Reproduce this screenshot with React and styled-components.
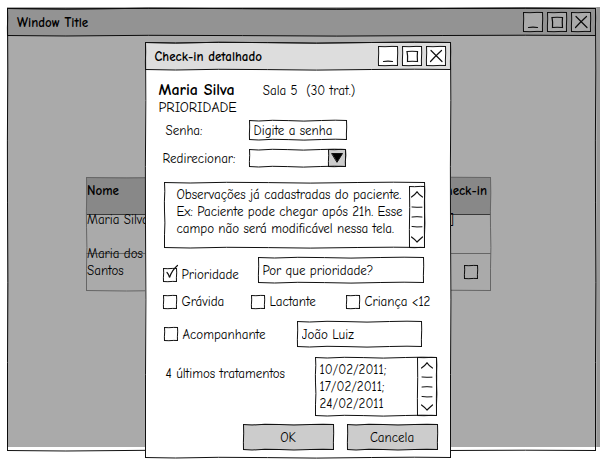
import React from 'react';
import styled, { createGlobalStyle, css } from 'styled-components';

const GlobalStyle = createGlobalStyle`
  *, *::before, *::after { box-sizing: border-box; }
  body { margin: 0; background: #fff; }
  body, button, input, select, textarea {
    font-family: "Comic Sans MS", "Comic Neue", Lato, sans-serif;
    font-size: 13px;
    line-height: 17px;
    color: #000;
  }
`;

/* ---------- hand-drawn outline ---------- */

const Outline = styled.svg`
  position: absolute;
  inset: 0;
  width: 100%;
  height: 100%;
  overflow: visible;
  pointer-events: none;
  fill: none;
  stroke: ${(p) => p.$color || '#111'};

  svg { overflow: visible; }
  path { vector-effect: non-scaling-stroke; }
`;

const LONG_H = 'M0 .5 L10 1 L24 .3 L40 .6 L56 1.1 L74 .5 L88 .2 L100 .5';
const LONG_V = 'M.5 0 L.8 14 L.4 30 L.5 44 L.9 62 L.5 80 L.5 100';
const SHORT_H = 'M0 .5 L35 .7 L70 .4 L100 .5';
const SHORT_V = 'M.5 0 L.7 35 L.4 70 L.5 100';

function Sketch({ color, small, low }) {
  const h = small ? SHORT_H : LONG_H;
  const v = small || low ? SHORT_V : LONG_V;
  return (
    <Outline $color={color} aria-hidden="true">
      <svg width="100%" height="1" viewBox="0 0 100 1" preserveAspectRatio="none"><path d={h} /></svg>
      <svg width="100%" y="100%" height="1" viewBox="0 1 100 1" preserveAspectRatio="none"><path d={h} /></svg>
      <svg width="1" height="100%" viewBox="0 0 1 100" preserveAspectRatio="none"><path d={v} /></svg>
      <svg width="1" x="100%" height="100%" viewBox="1 0 1 100" preserveAspectRatio="none"><path d={v} /></svg>
    </Outline>
  );
}

/* ---------- windows ---------- */

const Page = styled.div`
  position: relative;
  display: flex;
  min-height: 100vh;
  padding: 8px 12px 16px 7px;
`;

const MainWindow = styled.main`
  position: relative;
  flex: 1;
  background: #fff;
`;

const Dim = styled.div`
  position: absolute;
  inset: 7px 8px 20px 7px;
  background: rgba(0, 0, 0, 0.335);
`;

const EdgeShadow = styled.div`
  position: absolute;
  inset: 7px 8px 20px auto;
  width: 3px;
  background: #e4e4e4;
`;

const ModalLayer = styled.div`
  position: absolute;
  inset: 0;
  display: flex;
  justify-content: center;
  align-items: flex-start;
  padding: 42px 13px 8px 0;
`;

const Dialog = styled.section`
  position: relative;
  width: 306px;
  background: #fff;
`;

const TitleBar = styled.header`
  position: relative;
  display: flex;
  align-items: center;
  gap: 4px;
  height: 28px;
  padding: 0 5px 0 10px;
  background: #ddd;
`;

const Title = styled.h1`
  flex: 1;
  margin: 0;
  font-size: 13px;
  font-weight: 900;
`;

const WindowButton = styled.button`
  position: relative;
  display: block;
  width: 20px;
  height: 20px;
  padding: 0;
  border: 0;
  background: #fff;
`;

const Glyph = styled.svg`
  display: block;
  fill: none;
  stroke: #111;
  stroke-linecap: round;
`;

const controls = [
  { label: 'Minimizar', d: 'M5.500 15.500 Q10 14.700 14.500 15.500' },
  { label: 'Maximizar', d: 'M5 5.500 Q10 5 15.500 5.500 Q15 10 15.500 15.500 Q10 15 5.500 15.500 Q6 10 5 5.500Z' },
  { label: 'Fechar', d: 'M5 4.500 L16 15.500 M15.500 4.500 Q9 10.500 4.500 15.500' },
];

function WindowBar({ title }) {
  return (
    <TitleBar>
      <Title>{title}</Title>
      {controls.map((c) => (
        <WindowButton key={c.label} type="button" aria-label={c.label}>
          <Glyph width="20" height="20" viewBox="0 0 20 20"><path d={c.d} strokeWidth="1.2" /></Glyph>
          <Sketch small />
        </WindowButton>
      ))}
      <Sketch low />
    </TitleBar>
  );
}

/* ---------- table behind the dialog ---------- */

const TableFrame = styled.div`
  position: relative;
  width: 405px;
  max-width: 80%;
  margin: 141px auto 0 79px;
  padding-bottom: 12px;
  background:
    linear-gradient(#555, #555) 0 37px / 100% 1px no-repeat,
    linear-gradient(#999, #999) 0 76px / 100% 1px no-repeat,
    linear-gradient(#ccc, #ccc) 0 0 / 100% 37px no-repeat;
`;

const Table = styled.table`
  width: 100%;
  border-collapse: collapse;
  table-layout: fixed;
`;

const Cell = styled.td`
  height: 34px;
  width: ${(p) => p.$width || 'auto'};
  padding: 0 ${(p) => (p.$end ? '13px' : '0')} 0 1px;
  text-align: ${(p) => (p.$end ? 'right' : 'left')};
  vertical-align: ${(p) => p.$align || 'top'};
`;

const HeadCell = styled(Cell).attrs({ as: 'th' })`
  padding-top: 5px;
  padding-right: ${(p) => (p.$end ? '4px' : '0')};
  font-weight: 900;
`;

const TextMark = styled.span`
  display: inline-block;
  padding-right: 24px;
`;

/* ---------- form ---------- */

const Form = styled.form`
  display: flex;
  flex-direction: column;
  padding: 11px 13px 8px 14px;
`;

const Heading = styled.div`
  display: flex;
  align-items: center;
  gap: 28px;
  height: 18px;
`;

const Patient = styled.h2`
  margin: 0;
  font-size: 16px;
  font-weight: 900;
  line-height: 18px;
`;

const Status = styled.p`
  margin: 0;
  font-size: 14px;
`;

const Room = styled.span`
  white-space: pre;
`;

const Row = styled.div`
  display: flex;
  align-items: ${(p) => p.$align || 'center'};
  margin-top: ${(p) => p.$top}px;
  padding-left: ${(p) => p.$left || 0}px;
  justify-content: ${(p) => p.$justify || 'flex-start'};
`;

const FieldLabel = styled.label`
  width: ${(p) => (p.$width ? `${p.$width}px` : 'auto')};
  padding-top: ${(p) => p.$padTop || 0}px;
`;

const Field = styled.div`
  position: relative;
  display: flex;
  flex-shrink: 0;
  width: ${(p) => p.$width}px;
  height: ${(p) => p.$height}px;
  background: #fff;
`;

const control = css`
  flex: 1;
  min-width: 0;
  margin: 0;
  border: 0;
  border-radius: 0;
  background: transparent;
  appearance: none;
  outline: 0;
`;

const TextInput = styled.input`
  ${control}
  padding: 0 5px;
`;

const Select = styled.select`
  ${control}
  padding: 0 20px 0 5px;
`;

const SelectArrow = styled.span`
  position: absolute;
  inset: 0 0 0 auto;
  width: 18px;
  background: #ccc;
  pointer-events: none;
`;

const TextArea = styled.textarea`
  ${control}
  padding: 4px 0 0 ${(p) => p.$indent}px;
  resize: none;
  overflow: hidden;
`;

const ScrollTrack = styled.div`
  position: relative;
  display: flex;
  flex-direction: column;
  align-items: center;
  justify-content: space-between;
  width: ${(p) => p.$width}px;
  margin-top: ${(p) => p.$top || 0}px;
  padding: 5px 0;
`;

function Scrollbar({ width, top }) {
  return (
    <ScrollTrack $width={width} $top={top}>
      <Glyph width="12" height="7" viewBox="0 0 12 7"><path d="M.5 6 Q4 3.500 6 .8 Q8 4 11.500 6" strokeWidth="1.2" /></Glyph>
      <Glyph width="12" height="22" viewBox="0 0 12 22"><path d="M1 1 Q6 1.500 11 1.200 M1 11 Q6 10.300 11 11 M1 20.500 Q6 21.300 11 20.800" /></Glyph>
      <Glyph width="12" height="7" viewBox="0 0 12 7"><path d="M.5 1 Q4 3.500 6 6 Q8 4 11.500 1" strokeWidth="1.2" /></Glyph>
      <Sketch small />
    </ScrollTrack>
  );
}

const CheckLabel = styled.label`
  display: flex;
  align-items: center;
  gap: 5px;
  width: ${(p) => (p.$width ? `${p.$width}px` : 'auto')};
  white-space: nowrap;
`;

const CheckBox = styled.span`
  position: relative;
  display: inline-flex;
  width: 14px;
  height: 14px;
  vertical-align: bottom;
`;

const CheckInput = styled.input`
  ${control}
  width: 14px;
  height: 14px;

  & + svg { visibility: hidden; }
  &:checked + svg { visibility: visible; }
`;

const Tick = styled(Glyph)`
  position: absolute;
  inset: auto 0 0 0;
  overflow: visible;
  pointer-events: none;
`;

function Check(props) {
  return (
    <CheckBox>
      <CheckInput type="checkbox" {...props} />
      <Tick width="14" height="14" viewBox="0 0 14 14">
        <path d="M4 4.500 Q6 6.500 6.500 9.500 Q9 2 14.500 -2.500" strokeWidth="1.2" />
      </Tick>
      <Sketch small />
    </CheckBox>
  );
}

const ActionButton = styled.button`
  position: relative;
  width: 91px;
  height: 26px;
  padding: 0;
  border: 0;
  background: #ccc;
`;

const Actions = styled(Row)`
  gap: 13px;
`;

const notes =
  'Observações já cadastradas do paciente.\nEx: Paciente pode chegar após 21h. Esse\ncampo não será modificável nessa tela.';

export default function App() {
  return (
    <>
      <GlobalStyle />
      <Page>
        <MainWindow>
          <WindowBar title="Window Title" />
          <TableFrame>
            <Table>
              <thead>
                <tr>
                  <HeadCell $width="66px">Nome</HeadCell>
                  <HeadCell $end>Check-in</HeadCell>
                </tr>
              </thead>
              <tbody>
                <tr>
                  <Cell>Maria Silva</Cell>
                  <Cell $end><TextMark>[ ]</TextMark></Cell>
                </tr>
                <tr>
                  <Cell>Maria dos Santos</Cell>
                  <Cell $end $align="bottom"><Check aria-label="Check-in de Maria dos Santos" /></Cell>
                </tr>
              </tbody>
            </Table>
            <Sketch color="#999" />
          </TableFrame>
          <Sketch />
        </MainWindow>
        <EdgeShadow />
        <Dim />
        <ModalLayer>
          <Dialog role="dialog" aria-label="Check-in detalhado">
            <WindowBar title="Check-in detalhado" />
            <Form onSubmit={(e) => e.preventDefault()}>
              <Heading>
                <Patient>Maria Silva</Patient>
                <Room>{'Sala 5  (30 trat.)'}</Room>
              </Heading>
              <Status>PRIORIDADE</Status>

              <Row $top={4} $left={7}>
                <FieldLabel htmlFor="senha" $width={83}>Senha:</FieldLabel>
                <Field $width={98} $height={20}>
                  <TextInput id="senha" defaultValue="Digite a senha" />
                  <Sketch low />
                </Field>
              </Row>

              <Row $top={9} $left={4}>
                <FieldLabel htmlFor="sala" $width={86}>Redirecionar:</FieldLabel>
                <Field $width={97} $height={18}>
                  <Select id="sala" defaultValue=""><option value="" /></Select>
                  <SelectArrow>
                    <Glyph width="18" height="18" viewBox="0 0 18 18"><path d="M4 4.500 H14.500 L9.200 13Z" fill="#000" /></Glyph>
                    <Sketch small />
                  </SelectArrow>
                  <Sketch low />
                </Field>
              </Row>

              <Row $top={15} $left={5}>
                <Field $width={261} $height={66}>
                  <TextArea $indent={13} readOnly aria-label="Observações" wrap="off" defaultValue={notes} />
                  <Scrollbar width={16} top={4} />
                  <Sketch />
                </Field>
              </Row>

              <Row $top={9} $left={4} $align="flex-end">
                <CheckLabel $width={95}><Check defaultChecked />Prioridade</CheckLabel>
                <Field $width={166} $height={26}>
                  <TextInput aria-label="Motivo da prioridade" defaultValue="Por que prioridade?" />
                  <Sketch low />
                </Field>
              </Row>

              <Row $top={10} $left={4}>
                <CheckLabel $width={88}><Check />Grávida</CheckLabel>
                <CheckLabel $width={95}><Check />Lactante</CheckLabel>
                <CheckLabel><Check />Criança &lt;12</CheckLabel>
              </Row>

              <Row $top={11} $left={5}>
                <CheckLabel $width={133}><Check />Acompanhante</CheckLabel>
                <Field $width={125} $height={26}>
                  <TextInput aria-label="Nome do acompanhante" defaultValue="João Luiz" />
                  <Sketch low />
                </Field>
              </Row>

              <Row $top={10} $left={7} $align="flex-start">
                <FieldLabel htmlFor="tratamentos" $width={149} $padTop={8}>4 últimos tratamentos</FieldLabel>
                <Field $width={122} $height={59}>
                  <TextArea id="tratamentos" $indent={5} readOnly wrap="off" defaultValue={'10/02/2011;\n17/02/2011;\n24/02/2011'} />
                  <Scrollbar width={20} />
                  <Sketch />
                </Field>
              </Row>

              <Actions $top={8} $justify="flex-end">
                <ActionButton type="submit">OK<Sketch low /></ActionButton>
                <ActionButton type="button">Cancela<Sketch low /></ActionButton>
              </Actions>
            </Form>
            <Sketch />
          </Dialog>
        </ModalLayer>
      </Page>
    </>
  );
}
